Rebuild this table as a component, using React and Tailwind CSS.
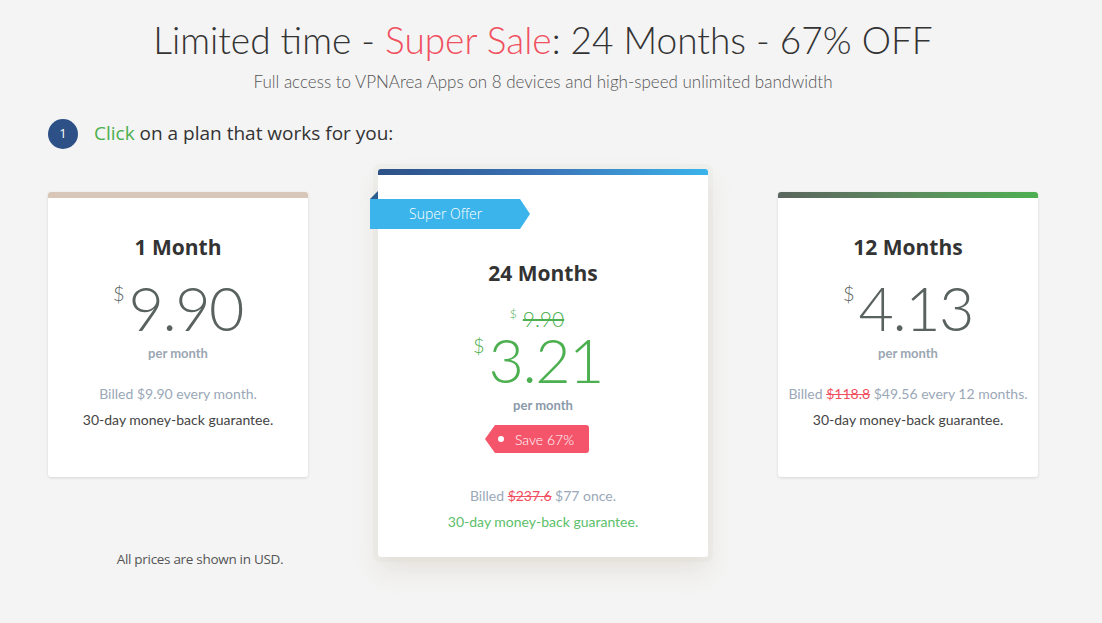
import React from "react";

const sans = "font-['Lato','Open_Sans',sans-serif]";
const myriad = "font-['Open_Sans','Noto_Sans',sans-serif]";

function Price({ value, color }) {
  return (
    <div className={`flex justify-center items-start ${sans} font-light ${color}`}>
      <span className="text-[20px] leading-none mt-[4px] mr-[4px]">$</span>
      <span className="text-[61px] leading-[58px] tracking-[-1.5px]">{value}</span>
    </div>
  );
}

function SideCard({ title, price, bar, billed }) {
  return (
    <div className="w-[260px] h-[285px] mt-[23px] bg-white rounded-[3px] shadow-[0_1px_3px_rgba(0,0,0,0.12)] overflow-hidden text-center">
      <div className={`h-[6px] ${bar}`}></div>
      <h3 className={`${myriad} font-bold text-[21px] text-[#333] mt-[36px] leading-[26px]`}>{title}</h3>
      <div className="mt-[19px]">
        <Price value={price} color="text-[#59625f]" />
      </div>
      <p className={`${sans} font-bold text-[13px] text-[#9aa6b2] mt-[7px]`}>per month</p>
      <p className={`${sans} text-[14px] text-[#9aa8b8] mt-[20px]`}>{billed}</p>
      <p className={`${sans} text-[14px] text-[#444] mt-[5px]`}>30-day money-back guarantee.</p>
    </div>
  );
}

export default function App() {
  return (
    <div className="min-h-[623px] bg-[#f4f4f4] pt-[18px] pl-[48px]">
      {/* Header */}
      <div className="w-[990px] text-center">
        <h1 className={`${sans} font-light text-[37px] leading-[44px] text-[#333]`}>
          Limited time - <span className="text-[#f0505f]">Super Sale</span>: 24 Months - 67% OFF
        </h1>
        <p className={`${sans} font-light text-[17px] text-[#555] mt-[7px]`}>
          Full access to VPNArea Apps on 8 devices and high-speed unlimited bandwidth
        </p>
      </div>

      {/* Step */}
      <div className="flex items-center gap-[16px] mt-[24px]">
        <div className="w-[30px] h-[30px] rounded-full bg-[#2d5186] text-white text-[13px] flex items-center justify-center font-['Open_Sans',sans-serif]">1</div>
        <p className={`${myriad} text-[19px] text-[#333]`}>
          <span className="text-[#4caf50]">Click</span> on a plan that works for you:
        </p>
      </div>

      {/* Plans */}
      <div className="flex items-start gap-[70px] mt-[20px]">
        <div className="flex flex-col items-center">
          <SideCard
            title="1 Month"
            price="9.90"
            bar="bg-[#d8c7b8]"
            billed="Billed $9.90 every month."
          />
          <p className={`${myriad} text-[13.5px] tracking-[-0.3px] text-[#555] mt-[72px] ml-[44px]`}>All prices are shown in USD.</p>
        </div>

        {/* Featured */}
        <div className="relative w-[330px] h-[388px] bg-white rounded-[3px] shadow-[0_14px_24px_rgba(200,190,170,0.3),0_0_0_5px_rgba(232,232,228,0.45)] text-center">
          <div className="h-[6px] rounded-t-[3px] bg-gradient-to-r from-[#2d5186] via-[#3a74b8] to-[#3ab4ea]"></div>
          {/* ribbon */}
          <div className="absolute left-[-8px] top-[22px] flex">
            <div className="absolute left-0 top-0 w-0 h-0 border-t-[8px] border-t-transparent border-r-[8px] border-r-[#2d5c8f]"></div>
            <div className="mt-[8px] flex">
              <div className={`h-[30px] w-[150px] bg-[#3ab4ea] text-white ${myriad} font-light text-[14px] leading-[30px] pl-[39px] text-left`}>
                Super Offer
              </div>
              <div className="w-0 h-0 border-t-[15px] border-b-[15px] border-l-[10px] border-t-transparent border-b-transparent border-l-[#3ab4ea]"></div>
            </div>
          </div>
          <h3 className={`${myriad} font-bold text-[21px] text-[#333] mt-[85px] leading-[26px]`}>24 Months</h3>
          <div className={`flex justify-center items-start ${sans} font-light text-[#4caf50] mt-[22px] -ml-[12px]`}>
            <span className="text-[12px] leading-none mr-[6px]">$</span>
            <span className="text-[21px] leading-[22px] line-through">9.90</span>
          </div>
          <div className="mt-[1px] -ml-[10px]">
            <Price value="3.21" color="text-[#4caf50]" />
          </div>
          <p className={`${sans} font-bold text-[13px] text-[#8a9aaa] mt-[7px]`}>per month</p>
          <div className="flex justify-center mt-[10px]">
            <div className="flex -ml-[12px]">
              <div className="w-0 h-0 border-t-[14px] border-b-[14px] border-r-[10px] border-t-transparent border-b-transparent border-r-[#f4556b]"></div>
              <div className={`h-[28px] bg-[#f4556b] rounded-r-[3px] flex items-center pl-[3px] pr-[15px] ${sans} font-light text-[14px] text-white`}>
                <span className="w-[6px] h-[6px] rounded-full bg-white mr-[11px]"></span>
                Save 67%
              </div>
            </div>
          </div>
          <p className={`${sans} text-[14px] text-[#9aa8b8] mt-[32px]`}>
            Billed <span className="text-[#f0505f] line-through">$237.6</span> $77 once.
          </p>
          <p className={`${sans} text-[14px] text-[#5cc06a] mt-[5px]`}>30-day money-back guarantee.</p>
        </div>

        <SideCard
          title="12 Months"
          price="4.13"
          bar="bg-gradient-to-r from-[#5a665e] via-[#5c8a5e] to-[#4caf50]"
          billed={
            <>
              Billed <span className="text-[#f0505f] line-through">$118.8</span> $49.56 every 12 months.
            </>
          }
        />
      </div>
    </div>
  );
}
